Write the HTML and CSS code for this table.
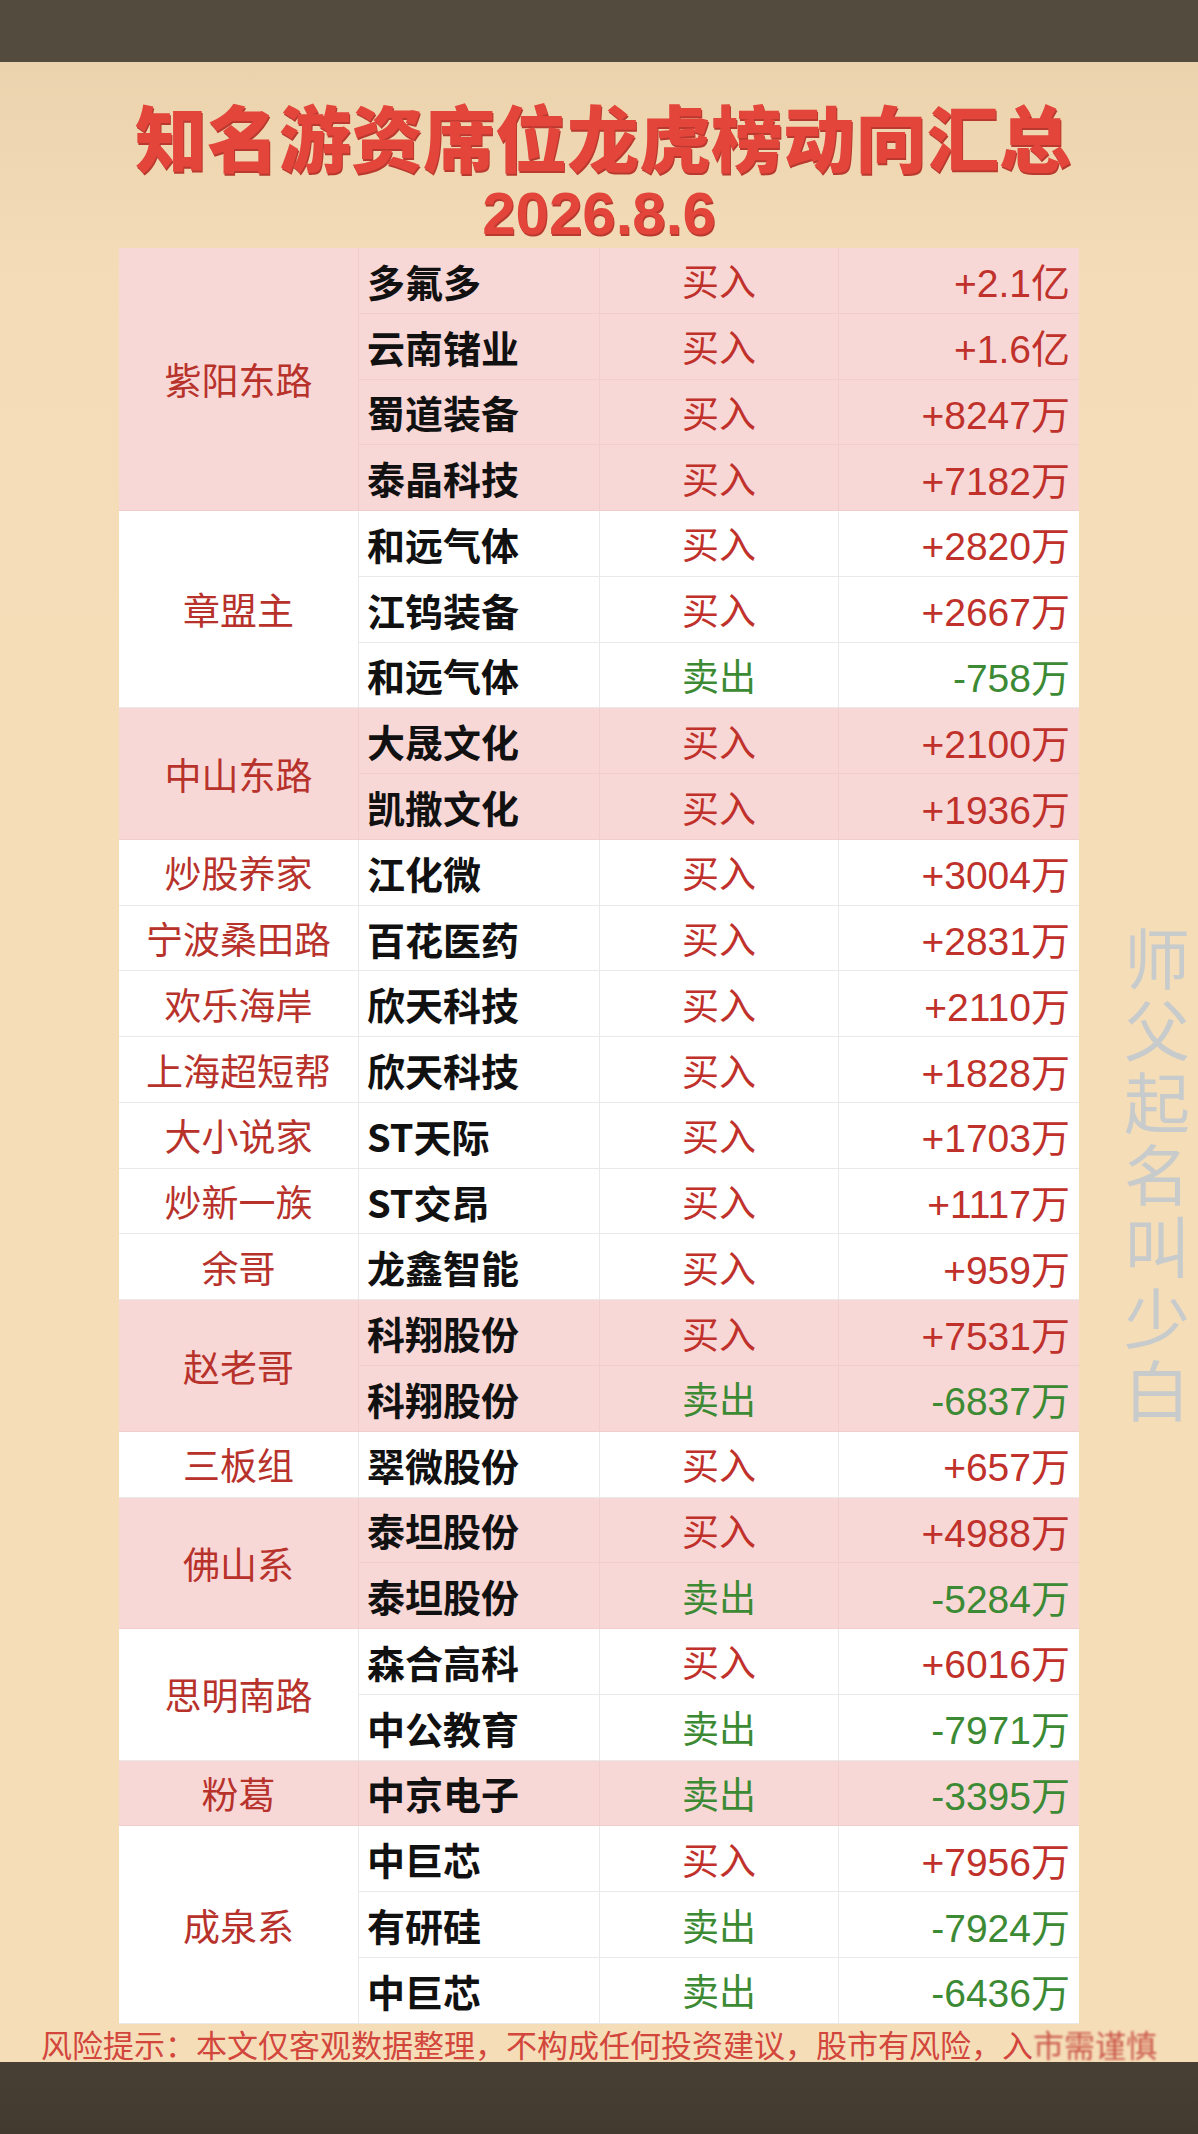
FILE: index.html
```html
<!DOCTYPE html>
<html lang="zh-CN">
<head>
  <meta charset="UTF-8">
  <meta name="viewport" content="width=device-width, initial-scale=1.0">
  <title>知名游资席位龙虎榜动向汇总</title>
  <link rel="stylesheet" href="styles.css">
</head>
<body>
  <div class="bar-top"></div>

  <div class="page">
    <h1 class="title">知名游资席位龙虎榜动向汇总</h1>
    <div class="date">2026.8.6</div>

    <div class="board">
      <div class="group pink">
        <div class="seat">紫阳东路</div>
        <div class="rows">
          <div class="row"><span class="stock">多氟多</span><span class="act buy">买入</span><span class="amt buy">+2.1亿</span></div>
          <div class="row"><span class="stock">云南锗业</span><span class="act buy">买入</span><span class="amt buy">+1.6亿</span></div>
          <div class="row"><span class="stock">蜀道装备</span><span class="act buy">买入</span><span class="amt buy">+8247万</span></div>
          <div class="row"><span class="stock">泰晶科技</span><span class="act buy">买入</span><span class="amt buy">+7182万</span></div>
        </div>
      </div>

      <div class="group">
        <div class="seat">章盟主</div>
        <div class="rows">
          <div class="row"><span class="stock">和远气体</span><span class="act buy">买入</span><span class="amt buy">+2820万</span></div>
          <div class="row"><span class="stock">江钨装备</span><span class="act buy">买入</span><span class="amt buy">+2667万</span></div>
          <div class="row"><span class="stock">和远气体</span><span class="act sell">卖出</span><span class="amt sell">-758万</span></div>
        </div>
      </div>

      <div class="group pink">
        <div class="seat">中山东路</div>
        <div class="rows">
          <div class="row"><span class="stock">大晟文化</span><span class="act buy">买入</span><span class="amt buy">+2100万</span></div>
          <div class="row"><span class="stock">凯撒文化</span><span class="act buy">买入</span><span class="amt buy">+1936万</span></div>
        </div>
      </div>

      <div class="group">
        <div class="seat">炒股养家</div>
        <div class="rows">
          <div class="row"><span class="stock">江化微</span><span class="act buy">买入</span><span class="amt buy">+3004万</span></div>
        </div>
      </div>

      <div class="group">
        <div class="seat">宁波桑田路</div>
        <div class="rows">
          <div class="row"><span class="stock">百花医药</span><span class="act buy">买入</span><span class="amt buy">+2831万</span></div>
        </div>
      </div>

      <div class="group">
        <div class="seat">欢乐海岸</div>
        <div class="rows">
          <div class="row"><span class="stock">欣天科技</span><span class="act buy">买入</span><span class="amt buy">+2110万</span></div>
        </div>
      </div>

      <div class="group">
        <div class="seat">上海超短帮</div>
        <div class="rows">
          <div class="row"><span class="stock">欣天科技</span><span class="act buy">买入</span><span class="amt buy">+1828万</span></div>
        </div>
      </div>

      <div class="group">
        <div class="seat">大小说家</div>
        <div class="rows">
          <div class="row"><span class="stock">ST天际</span><span class="act buy">买入</span><span class="amt buy">+1703万</span></div>
        </div>
      </div>

      <div class="group">
        <div class="seat">炒新一族</div>
        <div class="rows">
          <div class="row"><span class="stock">ST交昂</span><span class="act buy">买入</span><span class="amt buy">+1117万</span></div>
        </div>
      </div>

      <div class="group">
        <div class="seat">余哥</div>
        <div class="rows">
          <div class="row"><span class="stock">龙鑫智能</span><span class="act buy">买入</span><span class="amt buy">+959万</span></div>
        </div>
      </div>

      <div class="group pink">
        <div class="seat">赵老哥</div>
        <div class="rows">
          <div class="row"><span class="stock">科翔股份</span><span class="act buy">买入</span><span class="amt buy">+7531万</span></div>
          <div class="row"><span class="stock">科翔股份</span><span class="act sell">卖出</span><span class="amt sell">-6837万</span></div>
        </div>
      </div>

      <div class="group">
        <div class="seat">三板组</div>
        <div class="rows">
          <div class="row"><span class="stock">翠微股份</span><span class="act buy">买入</span><span class="amt buy">+657万</span></div>
        </div>
      </div>

      <div class="group pink">
        <div class="seat">佛山系</div>
        <div class="rows">
          <div class="row"><span class="stock">泰坦股份</span><span class="act buy">买入</span><span class="amt buy">+4988万</span></div>
          <div class="row"><span class="stock">泰坦股份</span><span class="act sell">卖出</span><span class="amt sell">-5284万</span></div>
        </div>
      </div>

      <div class="group">
        <div class="seat">思明南路</div>
        <div class="rows">
          <div class="row"><span class="stock">森合高科</span><span class="act buy">买入</span><span class="amt buy">+6016万</span></div>
          <div class="row"><span class="stock">中公教育</span><span class="act sell">卖出</span><span class="amt sell">-7971万</span></div>
        </div>
      </div>

      <div class="group pink">
        <div class="seat">粉葛</div>
        <div class="rows">
          <div class="row"><span class="stock">中京电子</span><span class="act sell">卖出</span><span class="amt sell">-3395万</span></div>
        </div>
      </div>

      <div class="group">
        <div class="seat">成泉系</div>
        <div class="rows">
          <div class="row"><span class="stock">中巨芯</span><span class="act buy">买入</span><span class="amt buy">+7956万</span></div>
          <div class="row"><span class="stock">有研硅</span><span class="act sell">卖出</span><span class="amt sell">-7924万</span></div>
          <div class="row"><span class="stock">中巨芯</span><span class="act sell">卖出</span><span class="amt sell">-6436万</span></div>
        </div>
      </div>
    </div>

    <p class="risk">风险提示：本文仅客观数据整理，不构成任何投资建议，股市有风险，入<span class="smudge">市需谨慎</span></p>

    <div class="watermark">师父起名叫少白</div>
  </div>

  <div class="bar-bottom"></div>
</body>
</html>
```

FILE: styles.css
```css
:root {
  --cream-top: #ead3ad;
  --cream: #f5ddb8;
  --pink: #f8d8d7;
  --line: #ebe8e8;
  --pink-line: #f1cecd;
  --red: #c0312b;
  --green: #3d8a34;
  --title-red: #e3453b;
}

* {
  box-sizing: border-box;
  margin: 0;
  padding: 0;
}

body {
  width: 1198px;
  height: 2134px;
  font-family: "Noto Sans CJK SC", "Noto Sans", sans-serif;
  background: var(--cream);
  overflow: hidden;
}

.bar-top {
  height: 62px;
  background: #534b3e;
}

.bar-bottom {
  height: 72px;
  background: linear-gradient(#483f35, #42392f);
}

.page {
  position: relative;
  height: 2000px;
  display: flex;
  flex-direction: column;
  align-items: center;
  background: linear-gradient(180deg, var(--cream-top) 0, #f3dcb7 220px, var(--cream) 600px, var(--cream) 100%);
}

.title {
  margin-top: 29px;
  padding-left: 8px;
  font-size: 72px;
  line-height: 88px;
  font-weight: 900;
  color: var(--title-red);
  text-shadow: 1px 2px 0 #b9392f;
}

.date {
  margin-top: 1px;
  font-family: "Liberation Sans", Arial, sans-serif;
  font-size: 60px;
  line-height: 68px;
  font-weight: 700;
  color: var(--title-red);
  text-shadow: 1px 2px 0 #b9392f;
}

.board {
  width: 960px;
  background: #fff;
}

.group {
  display: flex;
  background: #fff;
}

.group.pink {
  background: var(--pink);
}

.seat {
  width: 240px;
  flex-shrink: 0;
  display: flex;
  align-items: center;
  justify-content: center;
  font-size: 37px;
  color: #b8322c;
  border-right: 1px solid var(--line);
  border-bottom: 1px solid var(--line);
}

.rows {
  flex: 1;
}

.row {
  display: grid;
  grid-template-columns: 241px 239px 240px;
  height: 65.78px;
  align-items: center;
  border-bottom: 1px solid var(--line);
}

.pink .row,
.pink .seat {
  border-color: var(--pink-line);
}

.row span {
  display: flex;
  align-items: center;
  height: 100%;
}

.stock {
  padding-left: 8px;
  font-size: 38px;
  font-weight: 700;
  color: #111;
  border-right: 1px solid var(--line);
}

.act {
  justify-content: center;
  font-size: 37px;
  border-right: 1px solid var(--line);
}

.pink .stock,
.pink .act {
  border-right-color: var(--pink-line);
}

.amt {
  justify-content: flex-end;
  padding-right: 9px;
  font-family: "Liberation Sans", "Noto Sans CJK SC", sans-serif;
  font-size: 39px;
}

.buy {
  color: var(--red);
}

.sell {
  color: var(--green);
}

.risk {
  height: 38px;
  margin-top: 1px;
  font-size: 31px;
  line-height: 38px;
  color: #d2463c;
  white-space: nowrap;
}

.smudge {
  color: #c0392f;
  filter: blur(1px);
  opacity: 0.8;
}

.watermark {
  position: absolute;
  left: 1124px;
  top: 864px;
  writing-mode: vertical-rl;
  font-size: 66px;
  line-height: 66px;
  letter-spacing: 6px;
  color: #c8cbcc;
}
```
